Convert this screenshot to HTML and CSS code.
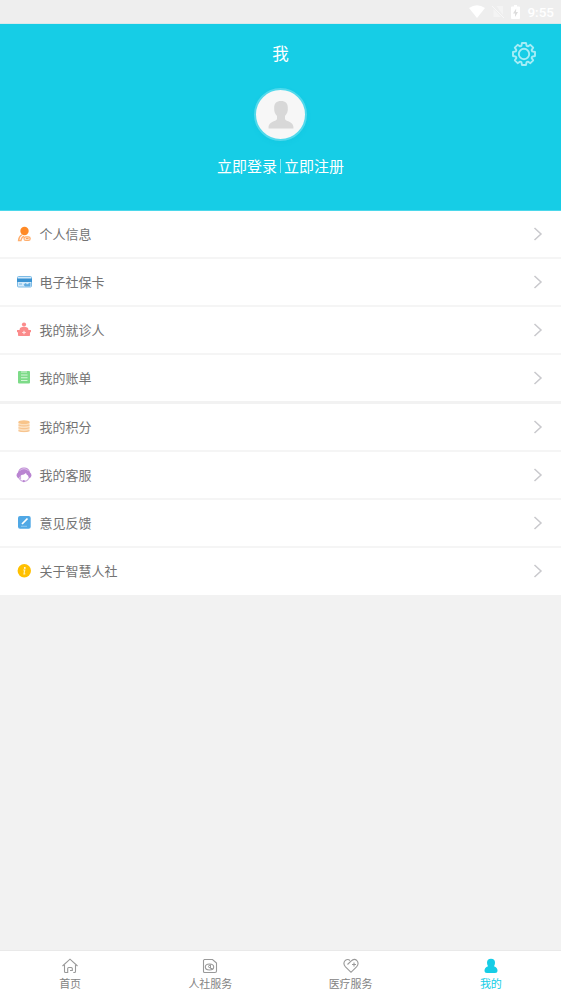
FILE: index.html
```html
<!DOCTYPE html>
<html lang="zh-CN">
<head>
<meta charset="utf-8">
<title>我</title>
<link rel="stylesheet" href="styles.css">
</head>
<body>
<div class="app">
  <div class="status">
    <svg class="wifi" width="16" height="13" viewBox="0 0 16 13"><path d="M0 3Q8-2.500 16 3L8 13Z" fill="#fff"/></svg>
    <svg class="sim" width="12" height="13" viewBox="0 0 12 13"><path d="M4.500 1H11v9zM1.500 4L9 12H1.500z" fill="#f4f4f4"/><path d="M0 1l12 12" stroke="#f8f8f8"/></svg>
    <svg class="battery" width="9" height="14" viewBox="0 0 9 14"><path d="M3 0h3v1.500h2q1 0 1 1V13q0 1-1 1H1q-1 0-1-1V2.500q0-1 1-1h2z" fill="#fff"/><path d="M5.200 3.500L2 8.500h2v3.500l3-5H5z" fill="#ddd"/></svg>
    <span class="time">9:55</span>
  </div>
  <header class="header">
    <div class="bar">
      <h1 class="title">我</h1>
      <svg class="gear" width="26" height="26" viewBox="-13 -13 26 26" fill="none" stroke="#a5edf6" stroke-width="1.900" stroke-linejoin="round"><path d="M-2-11H2L2.600-8.200 3.960-7.640 6.360-9.190 9.190-6.360 7.640-3.960 8.200-2.600 11-2V2L8.200 2.600 7.640 3.960 9.190 6.360 6.360 9.190 3.960 7.640 2.600 8.200 2 11H-2L-2.600 8.200-3.960 7.640-6.360 9.190-9.190 6.360-7.640 3.960-8.200 2.600-11 2V-2L-8.200-2.600-7.640-3.960-9.190-6.360-6.360-9.190-3.960-7.640-2.600-8.200Z"/><circle r="5.200"/></svg>
    </div>
    <div class="avatar">
      <svg width="26" height="28" viewBox="0 0 26 28"><path d="M13 0c4.500 0 7 2.500 6.800 7 .3 3-.8 6-2.800 8v3c1 3 9 2 8.500 9.500H.5C0 20 8 21 9 18v-3C7 13 5.900 10 6.200 7 6 2.500 8.500 0 13 0z" fill="#d8d8d8"/></svg>
    </div>
    <div class="auth"><span>立即登录</span><i class="sep"></i><span>立即注册</span></div>
  </header>
  <main>
    <ul class="group">
      <li class="row">
        <svg class="icon" viewBox="0 0 16 16"><circle cx="8.500" cy="5" r="4.200" fill="#ff8a26"/><path d="M6 8.800Q2.800 10.500 2.500 14.500H5Q5.500 11 8 10.500" fill="none" stroke="#ffae6d" stroke-width="1.300"/><rect x="8" y="10.800" width="6.200" height="3.700" rx="1.800" fill="#ffe2ca" stroke="#ffae6d" stroke-width="1.200"/><path d="M10 12.600h2.500" stroke="#ff9c4c"/></svg>
        <span>个人信息</span><svg class="arrow" viewBox="0 0 10 14"><path d="M1.500 1L8 7l-6.500 6"/></svg></li>
      <li class="row">
        <svg class="icon" viewBox="0 0 16 16"><rect x="1.500" y="2.500" width="14" height="10.500" rx="1" fill="#d3eafa" stroke="#7dbbe6"/><path d="M1 4.500h15v3.500H1z" fill="#3a93d2"/><path d="M3 10h3M8 10.500l2-1 1 1.500 3-2v3H9z" fill="#5fabe0" stroke="#5fabe0" stroke-width=".8"/></svg>
        <span>电子社保卡</span><svg class="arrow" viewBox="0 0 10 14"><path d="M1.500 1L8 7l-6.500 6"/></svg></li>
      <li class="row">
        <svg class="icon" viewBox="0 0 16 16" fill="#fb8b8b"><circle cx="8" cy="2.500" r="2.100"/><path d="M4 6q4-2.500 8 0l.5 2H15v2l-1 .5v2.700q0 .8-.8.8H2.800q-.8 0-.8-.8v-2.700L1 10V8h2.500z"/><path d="M8 8.700v3.600M6.200 10.500h3.600" stroke="#ffe3e3" stroke-width="1.200"/></svg>
        <span>我的就诊人</span><svg class="arrow" viewBox="0 0 10 14"><path d="M1.500 1L8 7l-6.500 6"/></svg></li>
      <li class="row">
        <svg class="icon" viewBox="0 0 16 16"><rect x="2" y="1" width="12" height="12.500" rx="1" fill="#7ddb88"/><path d="M5 2h6M5 5h6.500M5 7.800h6.500M5 10.500h6.500" stroke="#d5f6d9" stroke-width="1.100"/></svg>
        <span>我的账单</span><svg class="arrow" viewBox="0 0 10 14"><path d="M1.500 1L8 7l-6.500 6"/></svg></li>
    </ul>
    <ul class="group">
      <li class="row">
        <svg class="icon" viewBox="0 0 16 16"><path d="M2.500 3v9q5.500 2.500 11 0V3z" fill="#fce0bf"/><ellipse cx="8" cy="3.200" rx="5.700" ry="1.900" fill="#f8c48a"/><path d="M2.500 6q5.500 1.800 11 0M2.500 8.800q5.500 1.800 11 0M2.500 11.600q5.500 1.800 11 0" fill="none" stroke="#f7c48f" stroke-width="1.200"/></svg>
        <span>我的积分</span><svg class="arrow" viewBox="0 0 10 14"><path d="M1.500 1L8 7l-6.500 6"/></svg></li>
      <li class="row">
        <svg class="icon" viewBox="0 0 16 16"><path d="M2 5.500Q3 .5 8 .5t6 5q1.500 1 1.500 3T13 11.500l-1-3Q10.500 8 10 6 8 8 5.500 8L4 9.500 3 11.500Q.5 10.500.5 8.500t1.500-3z" fill="#b984d1"/><path d="M3.500 4Q4.500 1.700 8 1.700T12.500 4" fill="none" stroke="#e4ccee" stroke-width=".9"/><path d="M3 11q1.500 3.300 5 3.300t5-3.300M4.500 9v3" fill="none" stroke="#cfaee0" stroke-width="1.200"/><circle cx="7.800" cy="14.200" r="1.100" fill="#b984d1"/></svg>
        <span>我的客服</span><svg class="arrow" viewBox="0 0 10 14"><path d="M1.500 1L8 7l-6.500 6"/></svg></li>
      <li class="row">
        <svg class="icon" viewBox="0 0 16 16"><rect x="2" y="1" width="12.700" height="12.700" rx="2" fill="#50a8e5"/><path d="M6 9l5.500-5.500" stroke="#fff" stroke-width="1.700"/><path d="M5 11.300h6" stroke="#8ec8ef"/></svg>
        <span>意见反馈</span><svg class="arrow" viewBox="0 0 10 14"><path d="M1.500 1L8 7l-6.500 6"/></svg></li>
      <li class="row">
        <svg class="icon" viewBox="0 0 16 16"><circle cx="8.300" cy="7.700" r="6.700" fill="#ffc000"/><circle cx="8.800" cy="4.900" r=".9" fill="#fff"/><path d="M7.200 7h1.500L8 10.800h1.300" fill="none" stroke="#fff0b8" stroke-width="1.200"/></svg>
        <span>关于智慧人社</span><svg class="arrow" viewBox="0 0 10 14"><path d="M1.500 1L8 7l-6.500 6"/></svg></li>
    </ul>
  </main>
  <nav class="tabs">
    <a class="tab"><svg viewBox="0 0 16 16"><path d="M.5 8L8 1.200 15.500 8M2.500 7v6.500q0 1 1 1h2.200V10.500q0-1 1-1h2.600q1 0 1 1v2H8M13.500 7v6.500q0 1-1 1h-1.200"/></svg><span>首页</span></a>
    <a class="tab"><svg viewBox="0 0 16 16"><path d="M2 1.500h8.500L14.500 5v8q0 1.500-1.500 1.500H2.500q-1 0-1-1V2.500q0-1 1-1z"/><ellipse cx="7.500" cy="9" rx="4.200" ry="3"/><path d="M8.500 7.500q-2-.8-2 1t2.300 1M8.500 6.500v4h2" stroke-width="1"/></svg><span>人社服务</span></a>
    <a class="tab"><svg viewBox="0 0 16 16"><path d="M4.500 6.500L8 3.200Q11 0 13.800 2.500 16.500 5.500 13.500 8.800L8 14.300 2.500 8.800Q-.5 5.500 2.200 2.500 4.800.5 7 2.500M9 6.500h4M11 4.500v4"/></svg><span>医疗服务</span></a>
    <a class="tab active"><svg viewBox="0 0 16 16"><path d="M8 .8q4 0 4 4 0 2-1 3.400 3.500 1.300 3.500 4.300 0 2.500-2.500 2.500H4q-2.500 0-2.500-2.500 0-3 3.500-4.300Q4 6.800 4 4.800q0-4 4-4z"/></svg><span>我的</span></a>
  </nav>
</div>
</body>
</html>
```
FILE: styles.css
```css
* { box-sizing: border-box; }
body { margin: 0; font-family: "Noto Sans CJK SC", sans-serif; }
.app { display: flex; flex-direction: column; height: 997px; background: #f2f2f2; }
.status { display: flex; align-items: center; height: 24px; padding-right: 7px; justify-content: flex-end; background: #eee; border-bottom: 1px solid #d9e9eb; }
.wifi { margin-right: 7px; }
.sim { margin-right: 7.500px; }
.battery { margin-right: 7px; }
.time { font: 500 13.500px/24px Roboto, sans-serif; color: #fff; }
.header { display: flex; flex-direction: column; align-items: center; height: 187px; background: #16cde6; color: #fff; border-bottom: 1px solid #4bd8eb; }
.bar { display: grid; grid-template-columns: 1fr auto 1fr; align-items: center; width: 100%; height: 59px; padding: 0 24.500px; }
.title { grid-column: 2; margin: 0; padding-bottom: 2px; font-size: 16.500px; font-weight: 400; line-height: 24px; }
.gear { justify-self: end; }
.avatar { display: flex; align-items: center; justify-content: center; width: 53px; height: 53px; margin-top: 5px; border: 2px solid #51d9ec; border-radius: 50%; background: #f7f7f7; box-shadow: 0 2px 4px #10bdd833; }
.auth { display: flex; align-items: center; gap: 3px; margin-top: 14px; font-size: 15px; line-height: 22px; }
.sep { width: 1px; height: 14px; background: #8be6f2; }
.group { margin: 0 0 2px; padding: 0; list-style: none; background: #fff; }
.row { display: flex; align-items: center; height: 48px; padding: 0 18.500px 0 16px; border-bottom: 2px solid #f5f5f5; color: #737373; font-size: 13px; }
.row:last-child { border-bottom-color: #f2f2f2; }
.row span { flex: 1; margin-left: 7.500px; line-height: 20px; padding-bottom: 1px; }
.icon { width: 16px; height: 16px; }
.arrow { width: 10px; height: 14px; fill: none; stroke: #c9c9cd; stroke-width: 1.500; }
.group + .group { margin-top: -1px; }
.group + .group .row:last-child { border-bottom-width: 1px; padding-bottom: 1px; }
.tabs { display: grid; grid-template-columns: repeat(4, 1fr); height: 47px; margin-top: auto; border-top: 1px solid #e9e9e9; background: #fff; }
.tab { display: flex; flex-direction: column; align-items: center; padding-top: 7px; color: #838383; font-size: 11px; line-height: 16px; }
.tab svg { width: 16px; height: 16px; margin-bottom: 1px; fill: none; stroke: #999; stroke-width: 1.100; }
.tab.active { color: #16cde6; }
.tab.active svg { fill: #16cde6; stroke: none; }
```
